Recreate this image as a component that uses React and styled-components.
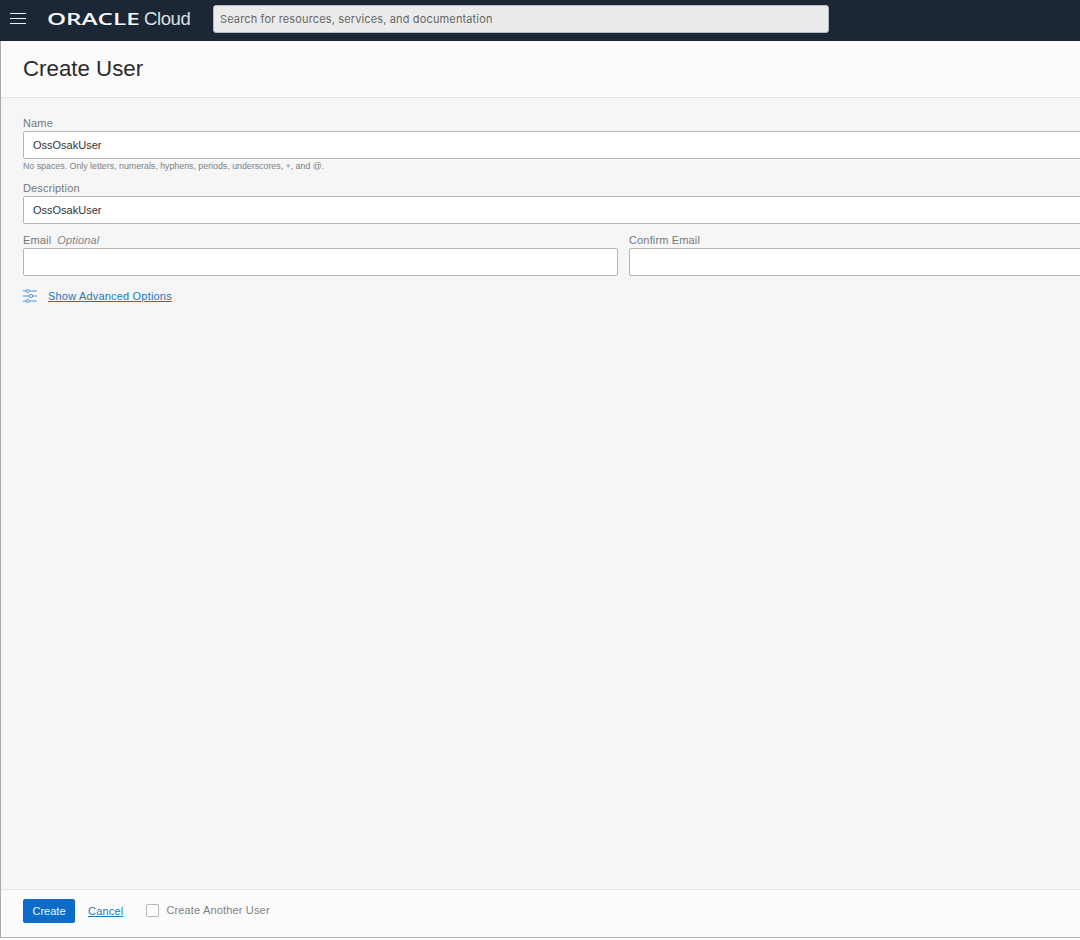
import React from 'react';
import styled, { createGlobalStyle } from 'styled-components';

const GlobalStyle = createGlobalStyle`
  html, body {
    margin: 0;
    height: 940px;
    overflow: hidden;
    background: #ffffff;
    font-family: "Liberation Sans", Arial, sans-serif;
  }
`;

const Page = styled.div`
  width: 1080px;
  height: 938px;
  overflow: hidden;
  display: flex;
  flex-direction: column;
`;

const TopBar = styled.header`
  flex: 0 0 41px;
  display: flex;
  align-items: center;
  background: #1c2736;
`;

const MenuButton = styled.button`
  width: 47px;
  height: 41px;
  padding: 0 0 3px 10px;
  border: none;
  background: none;
  display: flex;
  align-items: center;
`;

const Logo = styled.div`
  width: 166px;
  margin-top: -4px;
  display: flex;
  align-items: baseline;
  color: #fbfbfb;
  white-space: nowrap;
`;

const LogoWord = styled.span`
  display: inline-block;
  width: 93px;
  font-family: "Open Sans", sans-serif;
  font-size: 16.5px;
  font-weight: 600;
  line-height: 20px;
  transform: scaleX(1.47);
  transform-origin: left center;
`;

const LogoCloud = styled.span`
  font-size: 18.5px;
  font-weight: 400;
  line-height: 20px;
  margin-left: 4px;
  letter-spacing: -0.4px;
  color: #dfe1e4;
`;

const SearchBox = styled.div`
  box-sizing: border-box;
  width: 616px;
  height: 28px;
  margin: -3px 0 0 0;
  padding-left: 6px;
  display: flex;
  align-items: center;
  background: #ebebeb;
  border: 1px solid #b4b8bd;
  border-radius: 3px;
  font-family: "Inter", sans-serif;
  font-size: 11px;
  letter-spacing: 0.14px;
  color: #666666;
`;

const Panel = styled.main`
  flex: 1;
  min-height: 0;
  display: flex;
  flex-direction: column;
  border-left: 1px solid #a9a9a9;
  border-bottom: 1px solid #b4b4b4;
  background: #f6f6f7;
`;

const PanelHeader = styled.div`
  box-sizing: border-box;
  flex: 0 0 57px;
  padding: 14px 0 0 22px;
  background: #fcfcfc;
  border-bottom: 1px solid #e4e4e4;
`;

const Title = styled.h1`
  margin: 0;
  font-size: 22.3px;
  font-weight: 400;
  line-height: 28px;
  color: #2a2a2a;
`;

const Form = styled.form`
  flex: 1;
  display: flex;
  flex-direction: column;
  padding: 18px 0 0 22px;
`;

const Field = styled.div`
  width: ${(p) => p.$width || 1201}px;
  margin-bottom: ${(p) => p.$gap || 0}px;
`;

const Label = styled.label`
  display: block;
  font-size: 11px;
  line-height: 15px;
  letter-spacing: 0.15px;
  color: #767676;
`;

const Optional = styled.i`
  margin-left: 6px;
  color: #858585;
`;

const Input = styled.input`
  box-sizing: border-box;
  display: block;
  width: 100%;
  height: 28px;
  padding: 0 9px;
  background: #ffffff;
  border: 1px solid #b5b5b5;
  border-radius: 2px;
  outline: none;
  font-family: inherit;
  font-size: 11px;
  color: #333333;
`;

const Hint = styled.div`
  margin: 1px 0 9px;
  font-size: 8.82px;
  line-height: 12px;
  color: #808080;
`;

const EmailRow = styled.div`
  display: flex;
  gap: 11px;
  width: 1201px;
`;

const AdvancedRow = styled.div`
  display: flex;
  align-items: center;
  gap: 10px;
  margin-top: 12px;
  height: 16px;
`;

const TextLink = styled.a`
  font-size: 11px;
  letter-spacing: 0.19px;
  color: #2178b9;
  text-decoration: underline;
`;

const Footer = styled.footer`
  box-sizing: border-box;
  flex: 0 0 48px;
  display: flex;
  align-items: center;
  padding: 0 0 6px 22px;
  background: #fcfcfc;
  border-top: 1px solid #e4e4e4;
`;

const PrimaryButton = styled.button`
  width: 52px;
  height: 24px;
  padding: 0;
  border: none;
  border-radius: 2px;
  background: #0a6cc8;
  color: #f2f7fc;
  font-family: inherit;
  font-size: 11px;
`;

const CancelLink = styled(TextLink)`
  margin-left: 13px;
`;

const CheckRow = styled.label`
  display: flex;
  align-items: center;
  gap: 7px;
  margin: -1px 0 0 23px;
  font-size: 11px;
  letter-spacing: 0.16px;
  color: #808080;
`;

const CheckBox = styled.span`
  box-sizing: border-box;
  width: 13px;
  height: 13px;
  background: #ffffff;
  border: 1px solid #b5b5b5;
  border-radius: 2px;
`;

const MenuIcon = () => (
  <svg width="16" height="12" viewBox="0 0 16 12" fill="none" stroke="#f0f1f2" strokeWidth="1">
    <path d="M0 .5h16M0 5.5h16M0 10.5h16" />
  </svg>
);

const SlidersIcon = () => (
  <svg width="15" height="14" viewBox="0 0 15 14" fill="none" stroke="#3f8ac4" strokeWidth="0.9">
    <path d="M0 2h3M6.5 2H14M0 7h6.5M10 7h4M0 12h3M6.5 12H14" />
    <circle cx="4.7" cy="2" r="1.6" />
    <circle cx="8.2" cy="7" r="1.6" />
    <circle cx="4.7" cy="12" r="1.6" />
  </svg>
);

export default function App() {
  return (
    <Page>
      <GlobalStyle />
      <TopBar>
        <MenuButton aria-label="Menu">
          <MenuIcon />
        </MenuButton>
        <Logo>
          <LogoWord>ORACLE</LogoWord>
          <LogoCloud>Cloud</LogoCloud>
        </Logo>
        <SearchBox>Search for resources, services, and documentation</SearchBox>
      </TopBar>
      <Panel>
        <PanelHeader>
          <Title>Create User</Title>
        </PanelHeader>
        <Form>
          <Field>
            <Label>Name</Label>
            <Input defaultValue="OssOsakUser" />
            <Hint>No spaces. Only letters, numerals, hyphens, periods, underscores, +, and @.</Hint>
          </Field>
          <Field $gap={9}>
            <Label>Description</Label>
            <Input defaultValue="OssOsakUser" />
          </Field>
          <EmailRow>
            <Field $width={595}>
              <Label>
                Email<Optional>Optional</Optional>
              </Label>
              <Input />
            </Field>
            <Field $width={595}>
              <Label>Confirm Email</Label>
              <Input />
            </Field>
          </EmailRow>
          <AdvancedRow>
            <SlidersIcon />
            <TextLink>Show Advanced Options</TextLink>
          </AdvancedRow>
        </Form>
        <Footer>
          <PrimaryButton type="button">Create</PrimaryButton>
          <CancelLink>Cancel</CancelLink>
          <CheckRow>
            <CheckBox />
            Create Another User
          </CheckRow>
        </Footer>
      </Panel>
    </Page>
  );
}
